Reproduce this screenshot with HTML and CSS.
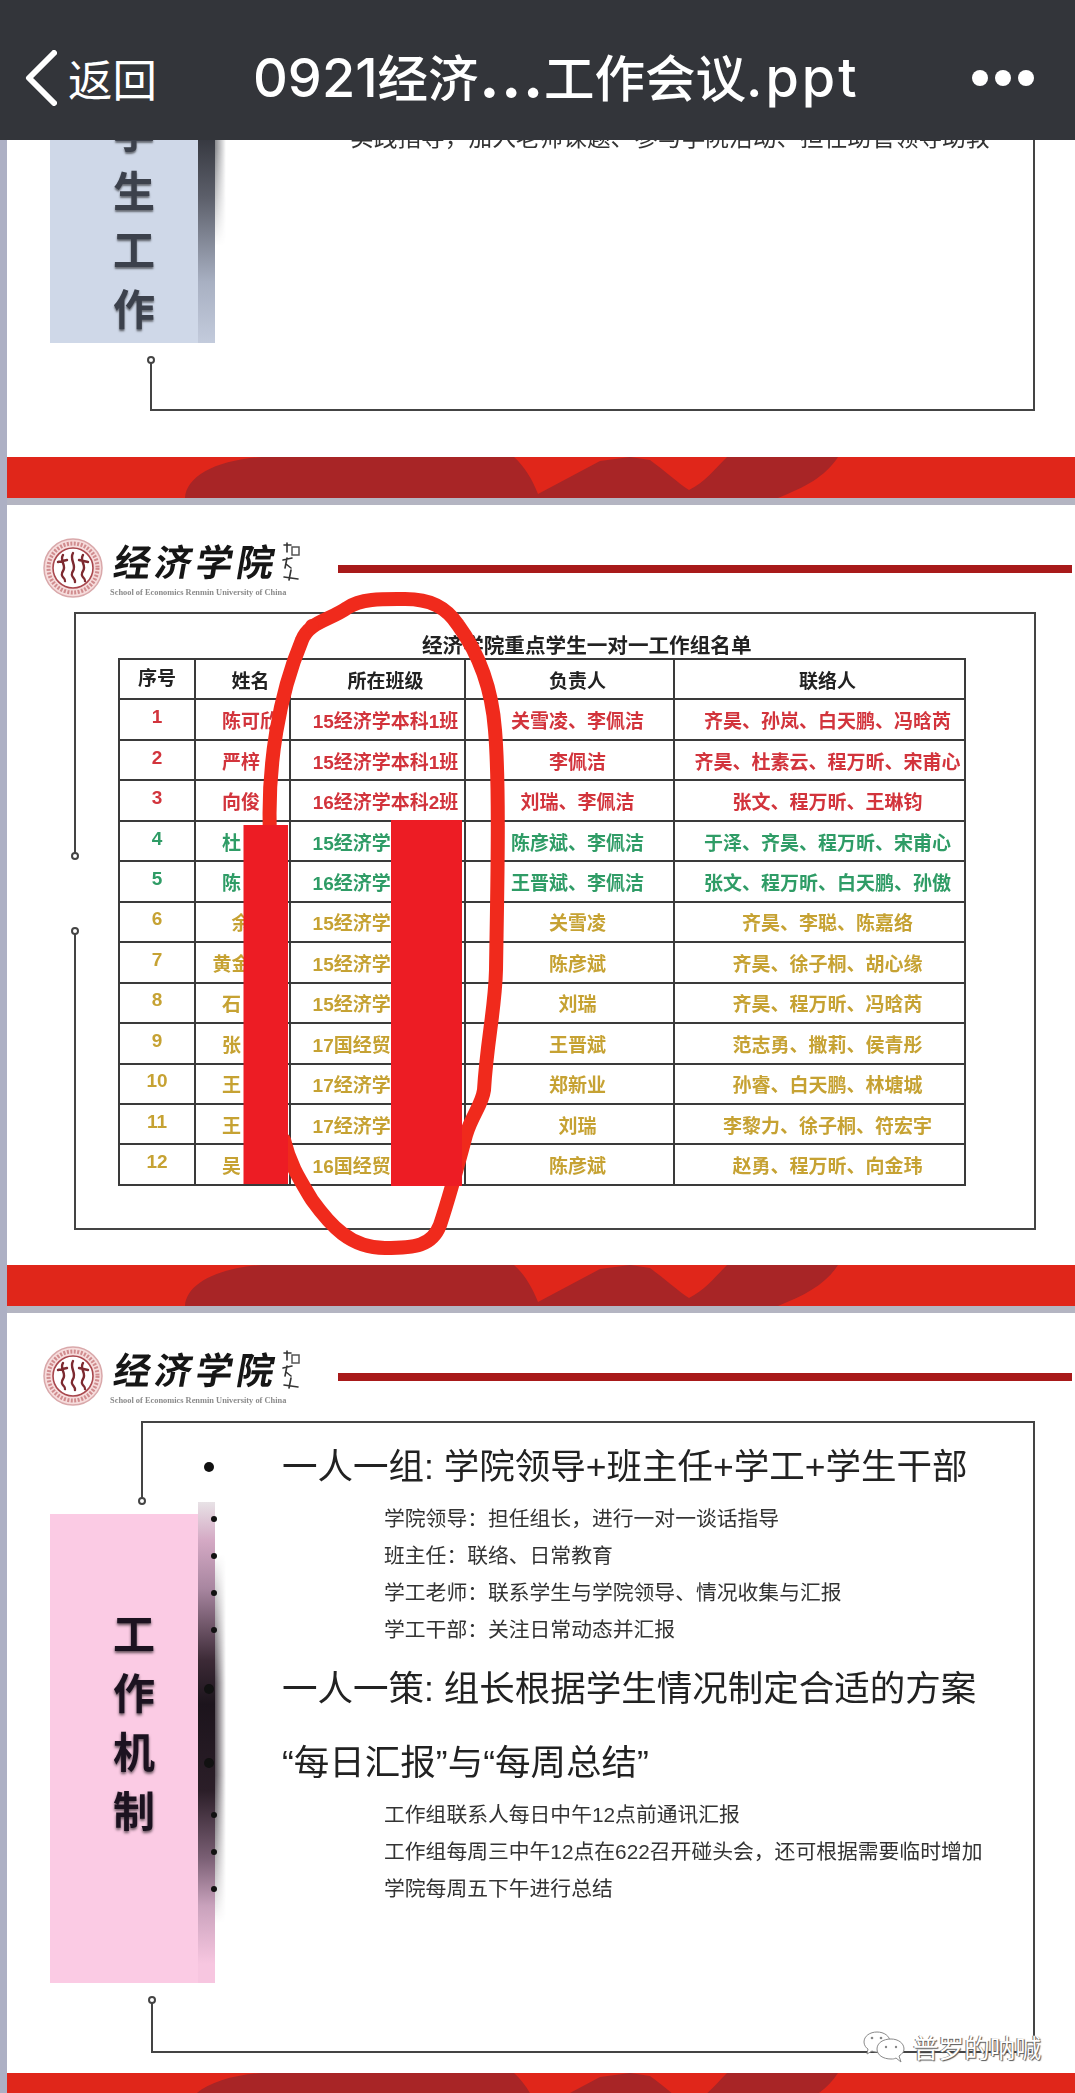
FILE: index.html
```html
<!DOCTYPE html>
<html lang="zh-CN">
<head>
<meta charset="utf-8">
<title>0921经济…工作会议.ppt</title>
<link rel="stylesheet" href="styles.css">
</head>
<body>
<div class="page">
  <header class="topbar">
    <svg class="back-icon" viewBox="0 0 32 56" width="32" height="56"><path d="M29 3 L4 28 L29 53" fill="none" stroke="#fff" stroke-width="6" stroke-linecap="round" stroke-linejoin="round"/></svg>
    <span class="back-label">返回</span>
    <h1 class="doc-title"><span class="latin">0921</span>经济<span class="ellipsis">…</span>工作会议<span class="latin ext">.ppt</span></h1>
    <div class="more"><i></i><i></i><i></i></div>
  </header>

  <section class="slide slide-a">
    <div class="frame frame-a">
      <span class="lower-left"></span>
      <span class="knob knob-a"></span>
      <p class="clipped-line">实践指导，加入老师课题、参与学院活动、担任助管领导助教</p>
    </div>
    <aside class="side side-blue">
      <span>学</span><span>生</span><span>工</span><span>作</span>
    </aside>
    <svg class="bar bar-a" viewBox="7 0 1068 41" preserveAspectRatio="none"><rect x="7" width="1068" height="41" fill="#e0261a"/><path d="M185 41C186 20 215 3 262 0L514 0C525 10 532 22 538 37L600 4 630 0 650 3C665 14 678 26 689 33C705 25 715 12 727 0L838 0C825 20 805 30 778 41Z" fill="#a82526"/></svg>
  </section>

  <section class="slide slide-b">
    <div class="head">
      <svg class="seal" viewBox="0 0 60 60" width="60" height="60">
        <circle cx="30" cy="30" r="29" fill="#f6dcdc" stroke="#d9a8aa" stroke-width="1.5"/>
        <circle cx="30" cy="30" r="24.5" fill="none" stroke="#d08c8e" stroke-width="4" stroke-dasharray="2 1.5"/>
        <circle cx="30" cy="30" r="20" fill="#fff" stroke="#a8464c" stroke-width="1.6"/>
        <path d="M20 17C16 23 24 27 20 33S23 40 22 43M30 15C26 22 34 27 30 33S33 40 32 44M40 17C36 23 44 27 40 33S43 40 42 43M15 24L24 22M36 22L45 24" fill="none" stroke="#7d2a30" stroke-width="2.4" stroke-linecap="round"/>
      </svg>
      <div class="brand">
        <div class="brand-top">
          <span class="brand-name">经济学院</span>
          <svg class="sign" viewBox="0 0 20 40" width="20" height="40"><path d="M4 3L11 3M7 1L7 10M3 18L12 16M7 16L5 26M6 22L11 26M4 35L18 37M11 28L9 38" fill="none" stroke="#333" stroke-width="1.6" stroke-linecap="round"/><rect x="12" y="5" width="7" height="8" fill="none" stroke="#555" stroke-width="1.5"/></svg>
        </div>
        <span class="brand-en">School of Economics Renmin University of China</span>
      </div>
      <div class="rule"></div>
    </div>
    <div class="frame frame-b">
      <span class="left-seg seg-top"></span>
      <span class="knob knob-b1"></span>
      <span class="knob knob-b2"></span>
      <span class="left-seg seg-bottom"></span>
      <h2 class="table-title">经济学院重点学生一对一工作组名单</h2>
      <table class="roster">
        <colgroup><col class="c1"><col class="c2"><col class="c3"><col class="c4"><col class="c5"></colgroup>
        <thead><tr><th>序号</th><th>姓名</th><th>所在班级</th><th>负责人</th><th>联络人</th></tr></thead>
        <tbody>
          <tr class="r"><td>1</td><td>陈可欣</td><td>15经济学本科1班</td><td>关雪凌、李佩洁</td><td>齐昊、孙岚、白天鹏、冯晗芮</td></tr>
          <tr class="r"><td>2</td><td>严梓<i class="gap g1"></i></td><td>15经济学本科1班</td><td>李佩洁</td><td>齐昊、杜素云、程万昕、宋甫心</td></tr>
          <tr class="r"><td>3</td><td>向俊<i class="gap g1"></i></td><td>16经济学本科2班</td><td>刘瑞、李佩洁</td><td>张文、程万昕、王琳钧</td></tr>
          <tr class="g"><td>4</td><td>杜<i class="gap g2"></i></td><td>15经济学<i class="gap gc"></i></td><td>陈彦斌、李佩洁</td><td>于泽、齐昊、程万昕、宋甫心</td></tr>
          <tr class="g"><td>5</td><td>陈<i class="gap g2"></i></td><td>16经济学<i class="gap gc"></i></td><td>王晋斌、李佩洁</td><td>张文、程万昕、白天鹏、孙傲</td></tr>
          <tr class="y"><td>6</td><td>余<i class="gap g1"></i></td><td>15经济学<i class="gap gc"></i></td><td>关雪凌</td><td>齐昊、李聪、陈嘉络</td></tr>
          <tr class="y"><td>7</td><td>黄金<i class="gap g2"></i></td><td>15经济学<i class="gap gc"></i></td><td>陈彦斌</td><td>齐昊、徐子桐、胡心缘</td></tr>
          <tr class="y"><td>8</td><td>石<i class="gap g2"></i></td><td>15经济学<i class="gap gc"></i></td><td>刘瑞</td><td>齐昊、程万昕、冯晗芮</td></tr>
          <tr class="y"><td>9</td><td>张<i class="gap g2"></i></td><td>17国经贸<i class="gap gc"></i></td><td>王晋斌</td><td>范志勇、撒莉、侯青彤</td></tr>
          <tr class="y"><td>10</td><td>王<i class="gap g2"></i></td><td>17经济学<i class="gap gc"></i></td><td>郑新业</td><td>孙睿、白天鹏、林塘城</td></tr>
          <tr class="y"><td>11</td><td>王<i class="gap g2"></i></td><td>17经济学<i class="gap gc"></i></td><td>刘瑞</td><td>李黎力、徐子桐、符宏宇</td></tr>
          <tr class="y"><td>12</td><td>吴<i class="gap g2"></i></td><td>16国经贸<i class="gap gc"></i></td><td>陈彦斌</td><td>赵勇、程万昕、向金玮</td></tr>
        </tbody>
      </table>
    </div>
    <svg class="marks" viewBox="0 505 1075 808" width="1075" height="808">
      <path d="M270 835C267 765 279 695 302 640C309 622 330 620 347 608C362 598 385 599 405 599C430 599 446 607 458 625C480 655 492 690 495 730C500 790 497 900 496 970C495 1010 487 1040 484 1090C482 1105 472 1115 466 1135C458 1165 450 1195 440 1225C432 1246 415 1248 385 1248C350 1248 330 1225 312 1200C300 1180 290 1165 284 1140" fill="none" stroke="#f02a1c" stroke-width="14" stroke-linecap="round"/>
      <circle cx="312" cy="626" r="7" fill="#f02a1c"/>
      <rect x="243.500" y="825" width="44.500" height="359" fill="#ed1c24"/>
      <rect x="391" y="820" width="71" height="366" fill="#ed1c24"/>
    </svg>
    <svg class="bar bar-b" viewBox="7 0 1068 41" preserveAspectRatio="none"><rect x="7" width="1068" height="41" fill="#e0261a"/><path d="M185 41C186 20 215 3 262 0L514 0C525 10 532 22 538 37L600 4 630 0 650 3C665 14 678 26 689 33C705 25 715 12 727 0L838 0C825 20 805 30 778 41Z" fill="#a82526"/></svg>
  </section>

  <section class="slide slide-c">
    <div class="head">
      <svg class="seal" viewBox="0 0 60 60" width="60" height="60">
        <circle cx="30" cy="30" r="29" fill="#f6dcdc" stroke="#d9a8aa" stroke-width="1.5"/>
        <circle cx="30" cy="30" r="24.5" fill="none" stroke="#d08c8e" stroke-width="4" stroke-dasharray="2 1.5"/>
        <circle cx="30" cy="30" r="20" fill="#fff" stroke="#a8464c" stroke-width="1.6"/>
        <path d="M20 17C16 23 24 27 20 33S23 40 22 43M30 15C26 22 34 27 30 33S33 40 32 44M40 17C36 23 44 27 40 33S43 40 42 43M15 24L24 22M36 22L45 24" fill="none" stroke="#7d2a30" stroke-width="2.4" stroke-linecap="round"/>
      </svg>
      <div class="brand">
        <div class="brand-top">
          <span class="brand-name">经济学院</span>
          <svg class="sign" viewBox="0 0 20 40" width="20" height="40"><path d="M4 3L11 3M7 1L7 10M3 18L12 16M7 16L5 26M6 22L11 26M4 35L18 37M11 28L9 38" fill="none" stroke="#333" stroke-width="1.6" stroke-linecap="round"/><rect x="12" y="5" width="7" height="8" fill="none" stroke="#555" stroke-width="1.5"/></svg>
        </div>
        <span class="brand-en">School of Economics Renmin University of China</span>
      </div>
      <div class="rule"></div>
    </div>
    <div class="frame frame-c">
      <span class="left-seg seg-c"></span>
      <span class="knob knob-c1"></span>
      <span class="lower-left lower-c"></span>
      <span class="knob knob-c2"></span>
      <ul class="outline">
        <li class="big">一人一组: 学院领导+班主任+学工+学生干部</li>
        <li class="sub first">学院领导：担任组长，进行一对一谈话指导</li>
        <li class="sub">班主任：联络、日常教育</li>
        <li class="sub">学工老师：联系学生与学院领导、情况收集与汇报</li>
        <li class="sub">学工干部：关注日常动态并汇报</li>
        <li class="big second">一人一策: 组长根据学生情况制定合适的方案</li>
        <li class="big third">“每日汇报”与“每周总结”</li>
        <li class="sub first">工作组联系人每日中午12点前通讯汇报</li>
        <li class="sub">工作组每周三中午12点在622召开碰头会，还可根据需要临时增加</li>
        <li class="sub">学院每周五下午进行总结</li>
      </ul>
    </div>
    <aside class="side side-pink">
      <span>工</span><span>作</span><span>机</span><span>制</span>
    </aside>
    <svg class="bar bar-c" viewBox="7 0 1068 41" preserveAspectRatio="none"><rect x="7" width="1068" height="41" fill="#e0261a"/><path d="M185 41C186 20 215 3 262 0L514 0C525 10 532 22 538 37L600 4 630 0 650 3C665 14 678 26 689 33C705 25 715 12 727 0L838 0C825 20 805 30 778 41Z" fill="#a82526"/></svg>
  </section>

  <div class="watermark">
    <svg viewBox="0 0 42 32" width="42" height="32"><path d="M14 1C7 1 1 5 1 11C1 14 3 17 5 18L4 23L9 20C11 21 13 21 15 21C20 21 27 17 27 11C27 5 21 1 14 1Z" fill="#fff" stroke="#8a8a8a"/><path d="M28 8C20 8 14 12 14 18C14 24 20 28 28 28C30 28 31 28 33 27L38 31L36 25C39 23 41 21 41 18C41 12 35 8 28 8Z" fill="#fff" stroke="#8a8a8a"/><circle cx="9" cy="7" r="1.300" fill="#888"/><circle cx="18" cy="7" r="1.300" fill="#888"/><circle cx="23" cy="16" r="1.200" fill="#888"/><circle cx="33" cy="16" r="1.200" fill="#888"/></svg>
    <span>普罗的呐喊</span>
  </div>
</div>
</body>
</html>
```
FILE: styles.css
```css
* { box-sizing: border-box; }
html, body { margin: 0; padding: 0; }
body {
  background: #adb0c4;
  font-family: "Liberation Sans", "Noto Sans CJK SC", sans-serif;
  color: #222;
}
.page { position: relative; width: 1075px; height: 2093px; overflow: hidden; padding-left: 7px; }

/* top bar */
.topbar {
  position: absolute; left: 0; top: 0; z-index: 10;
  width: 100%; height: 140px;
  display: flex; align-items: center;
  padding: 16px 41px 0 25px;
  background: #33353a; color: #fff;
}
.back-icon { flex: none; }
.back-label { margin-left: 11px; font: 400 44.500px/1 "Noto Sans CJK SC", sans-serif; }
.doc-title { margin: 0 0 0 96px; font: 500 50.500px/1 "Inter", "Noto Sans CJK SC", sans-serif; white-space: nowrap; }
.latin { font-size: 54px; }
.ext { letter-spacing: 3px; }
.ellipsis { font-size: 72px; line-height: 0; }
.more { margin-left: auto; display: flex; gap: 7px; }
.more i { width: 16px; height: 16px; border-radius: 50%; background: #fff; }

/* slides */
.slide { position: relative; background: #fff; filter: blur(0.5px); }
.slide-a { height: 505px; }
.slide-b { height: 808px; }
.slide-c { height: 780px; overflow: hidden; }
.slide-a, .slide-b { border-bottom: 7px solid #b4b5c2; }

.bar { position: absolute; left: 0; width: 1068px; height: 41px; display: block; }
.bar-a { top: 457px; }
.bar-b { top: 760px; }
.bar-c { top: 760px; }

/* frames */
.frame { position: relative; z-index: 2; border: 2px solid #444; border-left: 0; }
.frame-a { margin-left: 143px; width: 885px; height: 411px; border-top: 0; border-bottom: 0; padding: 126px 0 0 200px; }
.frame-b { margin-left: 67px; width: 962px; height: 618px; padding: 20px 0 0 44px; }
.frame-c { margin-left: 133.500px; width: 894.500px; height: 632px; border-bottom: 0; }
.head { height: 107px; }
.slide-c .head { height: 108px; }

.lower-left { position: absolute; left: 0; right: -2px; top: 360px; bottom: 0; border-left: 2px solid #444; border-bottom: 2px solid #444; }
.lower-c { left: 10px; top: auto; height: 54px; bottom: 0; right: -2px; }
.left-seg { position: absolute; left: 0; width: 2px; background: #444; }
.seg-top { top: -2px; height: 246px; }
.seg-bottom { top: 319px; bottom: -2px; }
.seg-c { top: -2px; height: 80px; }

.knob { position: absolute; width: 8px; height: 8px; margin: -4px 0 0 -3px; border: 2px solid #444; border-radius: 50%; background: #fff; }
.knob-a { left: 0; top: 360px; }
.knob-b1 { left: 0; top: 242px; }
.knob-b2 { left: 0; top: 317px; }
.knob-c1 { left: 0; top: 78px; }
.knob-c2 { left: 10px; top: 577px; }

.clipped-line { margin: 0; font-size: 23.700px; line-height: 24px; color: #333; white-space: nowrap; }

/* side labels */
.side {
  position: absolute; z-index: 1; left: 43px; width: 165px;
  display: flex; flex-direction: column; align-items: center;
  padding-left: 3px;
  font-weight: 700; font-size: 42px; line-height: 59px;
}
.side::after { content: ""; position: absolute; left: 148px; width: 17px; }
.side::before { content: ""; position: absolute; left: 165px; width: 11px; }
.side span { position: relative; z-index: 1; }
.side-blue {
  top: 100px; height: 243px; padding-top: 4px;
  background: #cfd8e8; color: #3c414c;
  text-shadow: 0 2px 2px rgba(0, 0, 0, .5);
}
.side-blue::after {
  top: 0; bottom: 0;
  background: linear-gradient(#2d2f36 10%, #5c5f6a 40%, #a8b0c2 75%, #c3cbdc 100%);
}
.side-blue::before {
  top: 0; bottom: 0;
  background: linear-gradient(to right, rgba(40, 42, 50, .55), transparent);
  -webkit-mask-image: linear-gradient(#000 20%, transparent 60%);
  mask-image: linear-gradient(#000 20%, transparent 60%);
}
.side-pink {
  top: 201px; height: 469px; padding-top: 92px;
  background: #fbcbe4; color: #1c1220;
  text-shadow: 0 2px 3px rgba(0, 0, 0, .6);
}
.side-pink::after {
  top: -12px; bottom: 0;
  background: linear-gradient(#e8e2e6 0%, #d4a9c4 8%, #a886a0 18%, #3c2a36 33%, #1c141c 42%, #2b1e28 60%, #7a5f74 74%, #c9a2bc 84%, #f7c6e0 96%);
}
.side-pink::before {
  top: 40px; bottom: 60px;
  background: linear-gradient(to right, rgba(30, 20, 30, .75), transparent);
  -webkit-mask-image: linear-gradient(transparent, #000 35%, #000 60%, transparent);
  mask-image: linear-gradient(transparent, #000 35%, #000 60%, transparent);
}

/* header of a slide */
.head { display: flex; padding: 33px 3px 0 36px; }
.seal { flex: none; }
.brand { margin-left: 7px; width: 190px; display: flex; flex-direction: column; }
.brand-top { display: flex; justify-content: space-between; height: 50px; }
.brand-name {
  font: 700 37px/44px "Noto Sans CJK SC", sans-serif;
  letter-spacing: 4px; color: #161616; white-space: nowrap;
  transform: skewX(-10deg); transform-origin: left bottom;
}
.sign { flex: none; margin-top: 4px; }
.brand-en { font: 700 8.400px/10px "Liberation Serif", serif; color: #8b8b8b; white-space: nowrap; }
.rule { flex: 1; height: 8px; margin: 27px 0 0 38px; background: #a81a1a; }

/* table */
.table-title { margin: 0 0 0 304px; font-size: 20.600px; font-weight: 700; line-height: 24px; color: #222; white-space: nowrap; }
.roster { width: 846px; height: 526px; table-layout: fixed; border-collapse: collapse; font-size: 19px; font-weight: 700; text-align: center; }
.c1 { width: 76px; }
.c2 { width: 95px; }
.c3 { width: 175px; }
.c4 { width: 209px; }
.c5 { width: 291px; }
.roster th, .roster td { height: 40.460px; padding: 0; border: 2px solid #3a3a3a; white-space: nowrap; }
.roster th + th, .roster td + td { padding-left: 16px; }
.roster th:first-child, .roster td:first-child { padding-bottom: 5px; }
.roster th { color: #222; }
.roster .r { color: #d2343c; }
.roster .g { color: #2f9c66; }
.roster .y { color: #c6a233; }
.gap { display: inline-block; height: 1em; }
.g1 { width: 1em; }
.g2 { width: 2em; }
.gc { width: 3.560em; }

/* overlay drawing on the table */
.marks { position: absolute; z-index: 3; left: -7px; top: 0; }

/* outline list */
.outline { list-style: none; margin: 0; padding: 22px 0 0 141.500px; }
.outline li { position: relative; white-space: nowrap; }
.outline li::before { content: ""; position: absolute; background: #111; border-radius: 50%; }
.big { font-size: 35.500px; line-height: 44px; color: #222; }
.big::before { left: -78px; top: 17px; width: 10px; height: 10px; }
.sub { padding-left: 102px; font-size: 20.800px; line-height: 37px; color: #333; }
.sub::before { left: -71px; top: 16px; width: 6px; height: 6px; }
.sub.first { margin-top: 10.500px; }
.big.second { margin-top: 19.500px; }
.big.third { margin-top: 30px; }

/* watermark */
.watermark {
  position: absolute; left: 863px; top: 2031px; z-index: 5;
  display: flex; align-items: center; gap: 8px;
  font: 400 25.600px/32px "Noto Sans CJK SC", sans-serif; color: #fff;
  text-shadow: 1px 1px 1px #555, -1px 0 0 #777;
  white-space: nowrap;
}
```
